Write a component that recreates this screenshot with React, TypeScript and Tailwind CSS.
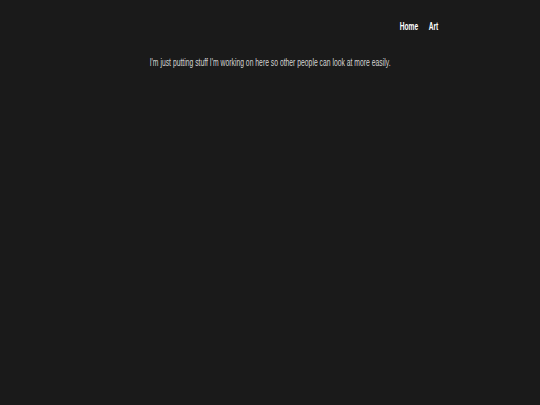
export default function App() {
  return (
    <div className="min-h-[405px] bg-[#1a1a1a] text-[#e6e6e6] font-['Liberation_Sans',Arial,sans-serif]">
      <div className="mx-auto w-[336px]">
        <nav className="flex justify-end pt-[20px] text-[10px] leading-[14px] font-bold text-white">
          <span className="inline-block origin-right scale-x-[0.66] space-x-[16px] whitespace-nowrap">
            <a href="#">Home</a>
            <a href="#">Art</a>
          </span>
        </nav>
        <p className="mt-[22px] text-center text-[10px] leading-[14px] text-[#d4d4d4] whitespace-nowrap">
          <span className="inline-block origin-center scale-x-[0.68] -mx-[40px]">
            I'm just putting stuff I'm working on here so other people can look at more easily.
          </span>
        </p>
      </div>
    </div>
  );
}
